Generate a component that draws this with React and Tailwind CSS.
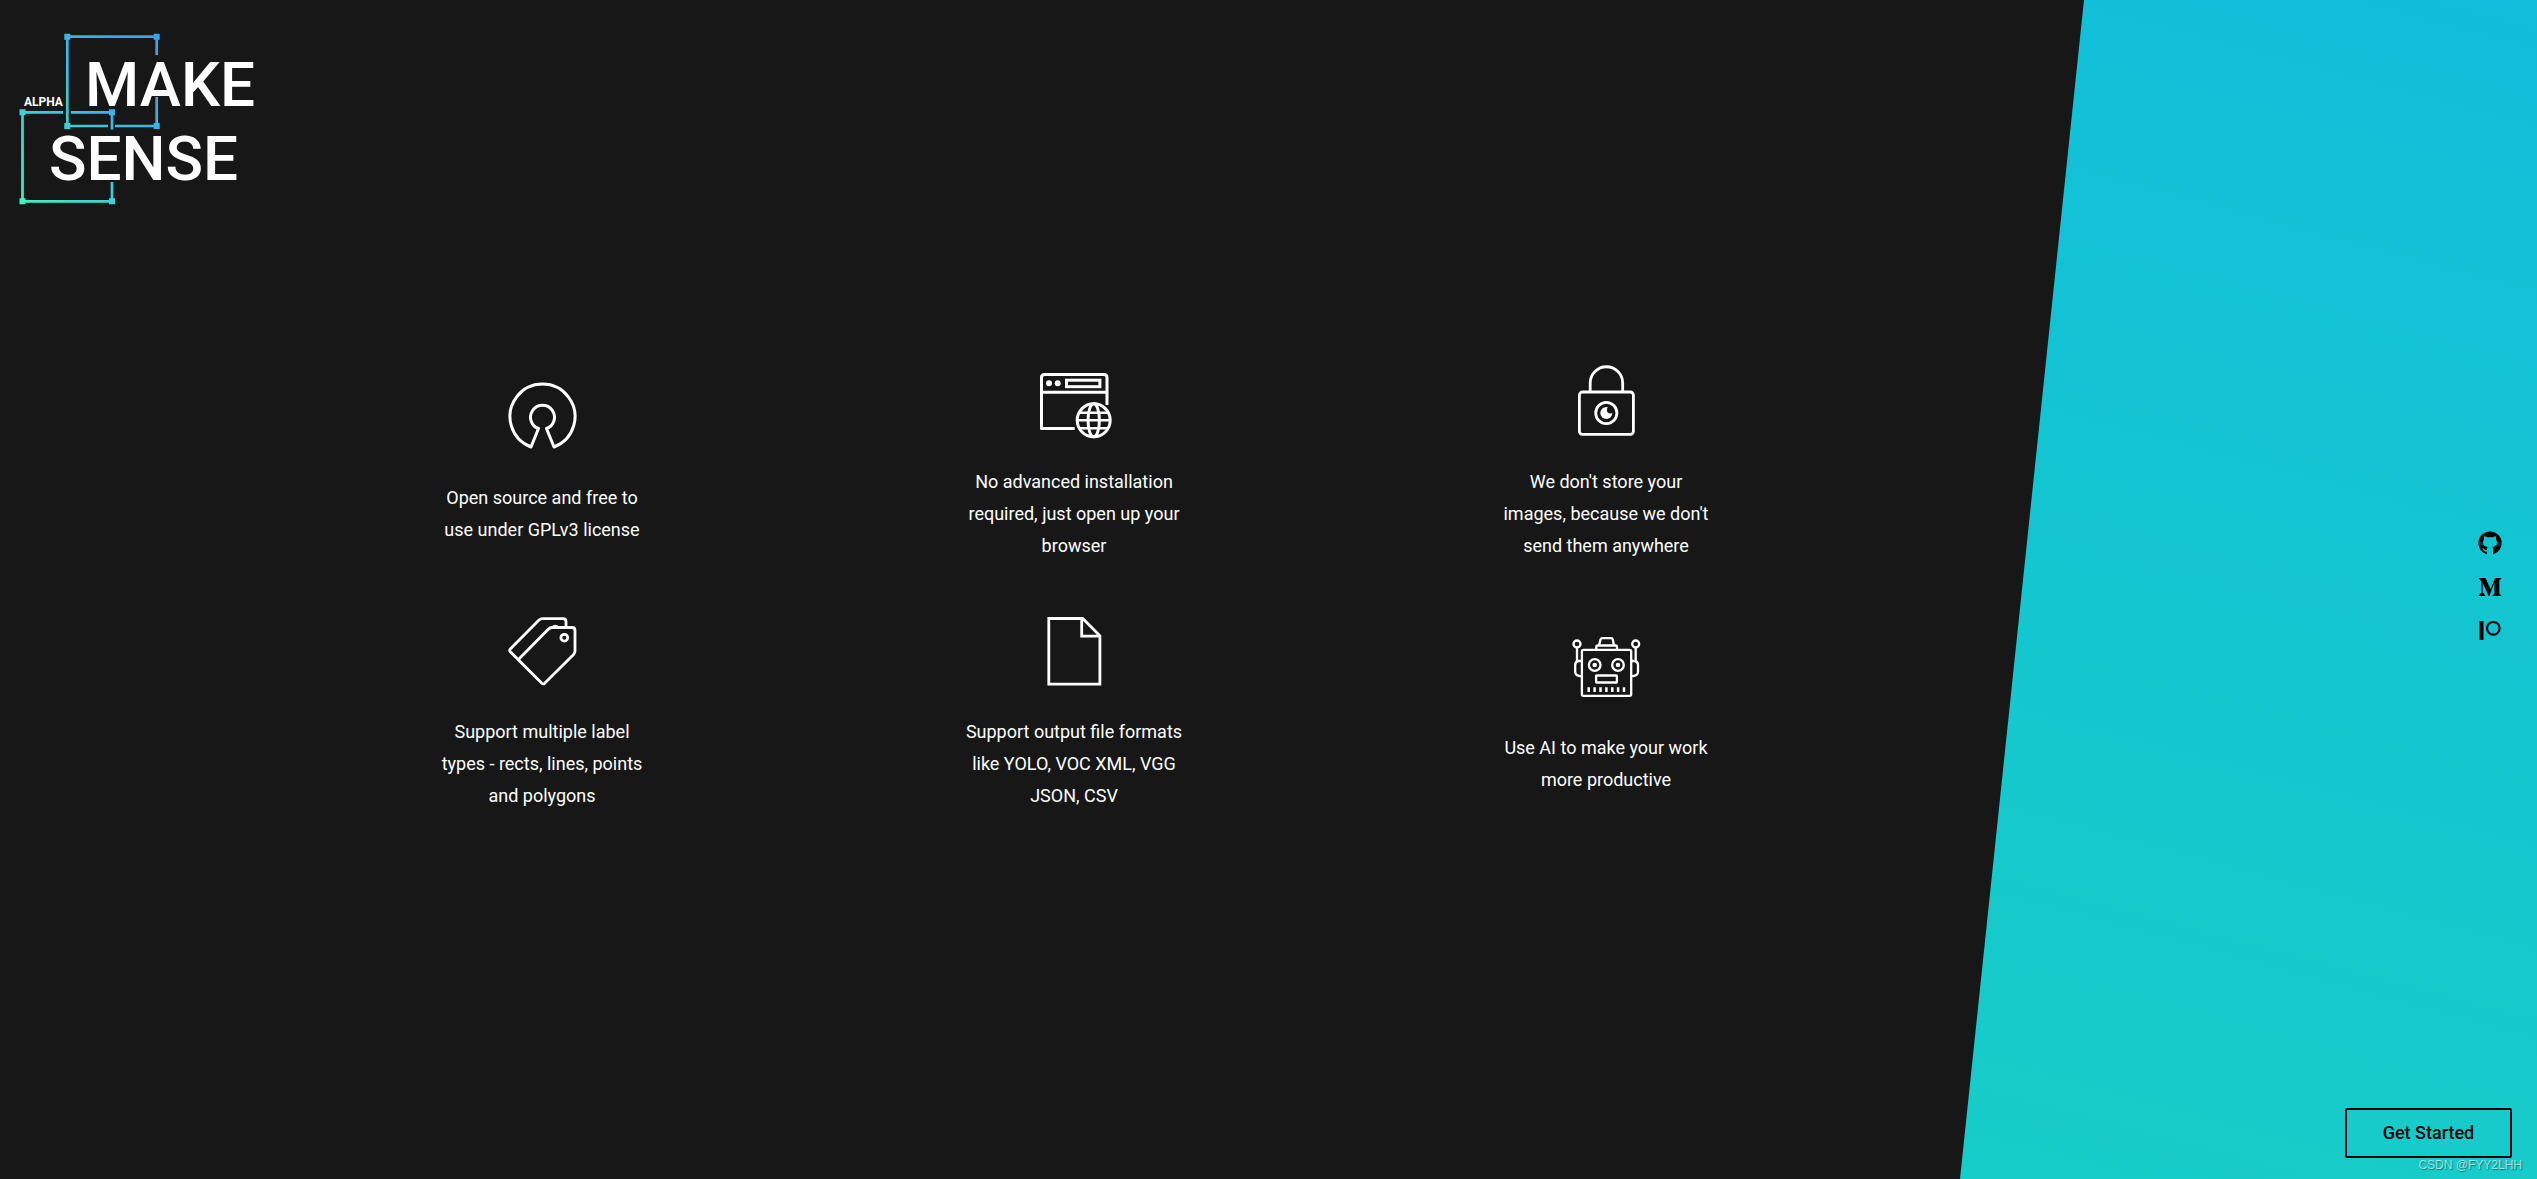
import React from "react";
import { FaMediumM } from "react-icons/fa";

function Logo() {
  return (
    <svg
      role="img"
      aria-label="Make Sense alpha"
      viewBox="16 30 244 176"
      className="h-44 w-[244px]"
      fill="none"
    >
      <defs>
        <linearGradient id="upper" gradientUnits="userSpaceOnUse" x1="67" y1="126" x2="140" y2="60">
          <stop offset="0" stopColor="#3cd0d4" />
          <stop offset="1" stopColor="#38a4f0" />
        </linearGradient>
        <linearGradient id="lower" gradientUnits="userSpaceOnUse" x1="22" y1="201" x2="112" y2="112">
          <stop offset="0" stopColor="#3cf4bc" />
          <stop offset="1" stopColor="#38b4ec" />
        </linearGradient>
      </defs>
      <path d="M156.700 55V36.700H67.300V126H108M115 126H156.700V97" stroke="url(#upper)" strokeWidth="2.700" />
      <path
        d="M64.300 33.700h6v6h-6zM153.700 33.700h6v6h-6zM64.300 123h6v6h-6zM153.700 123h6v6h-6z"
        fill="url(#upper)"
      />
      <path d="M63 112.300H22.500V201.300H112V182M71 112.300H112V129.500" stroke="url(#lower)" strokeWidth="2.700" />
      <path
        d="M19.500 109.300h6v6h-6zM109 109.300h6v6h-6zM19.500 198.300h6v6h-6zM109 198.300h6v6h-6z"
        fill="url(#lower)"
      />
      <g fill="#ffffff" className="font-medium">
        <text x="85" y="106" fontSize="62">MAKE</text>
        <text x="49" y="180" fontSize="62">SENSE</text>
        <text x="24" y="106" fontSize="12" className="font-bold">ALPHA</text>
      </g>
    </svg>
  );
}

function Icon({ width = 2.8, children }) {
  return (
    <svg
      aria-hidden="true"
      viewBox="0 0 72 72"
      className="size-[72px] overflow-visible"
      fill="none"
      stroke="#ffffff"
      strokeWidth={width}
    >
      {children}
    </svg>
  );
}

const OpenSourceIcon = () => (
  <Icon width={3}>
    <path d="M32.500 48.500L25 67A32.500 32.500 0 1 1 48 67L40.500 48.500A12 12 0 1 0 32.500 48.500Z" strokeLinejoin="round" />
  </Icon>
);

const BrowserIcon = () => (
  <Icon width={3}>
    <path d="M69 41V13.500Q69 10.500 66 10.500H6.500Q3.500 10.500 3.500 13.500V64.500H36.700M3.500 28.300H69" strokeLinejoin="round" />
    <g fill="#ffffff" stroke="none">
      <circle cx="11" cy="19.300" r="3" />
      <circle cx="19.700" cy="19.300" r="3" />
    </g>
    <rect x="28.500" y="16.200" width="33.400" height="6.500" />
    <circle cx="55.700" cy="56.300" r="16.500" />
    <ellipse cx="55.700" cy="56.300" rx="5.700" ry="16.500" />
    <path d="M41 48.700H70.500M39.500 56.300H72M41 64.200H70.500" strokeWidth="2.600" />
  </Icon>
);

const LockIcon = () => (
  <Icon>
    <rect x="9.400" y="28" width="54" height="42.300" rx="3" />
    <path d="M20.200 28V19A16.250 16.250 0 0 1 52.700 19V28" />
    <circle cx="36.300" cy="49" r="10.600" />
    <circle cx="36.300" cy="49" r="6" fill="#ffffff" stroke="none" />
    <circle cx="40.300" cy="46" r="3.400" fill="#171717" stroke="none" />
  </Icon>
);

const TagsIcon = () => (
  <Icon>
    <path d="M12.700 45.300L42 15.500Q44 13.500 46 13.500H66Q69 13.500 69 16.500V37Q69 39 67.600 40.400L38.700 69.300Q37.200 70.500 35.800 69.300L4.300 37.800Q3 36.300 4.300 35L33 6Q34.500 4.600 36.500 4.600H57Q60 4.600 60 7.600V13" />
    <circle cx="58.300" cy="23.700" r="3.400" />
    <path d="M45.500 13.500Q49.500 9.500 53 13.500" strokeWidth="1.500" />
  </Icon>
);

const FileIcon = () => (
  <Icon>
    <path d="M44.700 4.500H10.800V70.200H61.900V21.800ZM43.700 4.500V22.200H61.900" />
  </Icon>
);

const RobotIcon = () => (
  <Icon width={2.3}>
    <rect x="11.900" y="19.900" width="49.300" height="45.900" rx="1.500" />
    <path d="M26.300 19V17Q26.300 15.500 27.800 15.500H45.500Q47 15.500 47 17V19M29 15.500L30.500 9.500Q31 8.200 32.400 8.200H41Q42.400 8.200 42.800 9.500L44 15.500" />
    <circle cx="7" cy="14" r="3.500" />
    <circle cx="65.700" cy="14" r="3.500" />
    <path d="M7 17.500V31M65.700 17.500V31M12 31H8.500Q5.200 31.500 5.200 35V42Q5.200 46 12 46.300M61 31H64.500Q68 31.500 68 35V42Q68 46 61 46.300" />
    <circle cx="24.700" cy="35" r="5.800" />
    <circle cx="48" cy="35" r="5.800" />
    <circle cx="24.700" cy="35" r="2.300" fill="#ffffff" stroke="none" />
    <circle cx="48" cy="35" r="2.300" fill="#ffffff" stroke="none" />
    <rect x="26.100" y="45.500" width="20.800" height="7" rx="0.500" />
    <path
      d="M18.700 57.300V62M24.600 57.300V62M30.500 57.300V62M36.400 57.300V62M42.300 57.300V62M48.100 57.300V62M54 57.300V62"
      strokeWidth="2.500"
    />
  </Icon>
);

const features = [
  { icon: OpenSourceIcon, lines: ["Open source and free to", "use under GPLv3 license"] },
  { icon: BrowserIcon, lines: ["No advanced installation", "required, just open up your", "browser"] },
  { icon: LockIcon, lines: ["We don't store your", "images, because we don't", "send them anywhere"] },
  { icon: TagsIcon, lines: ["Support multiple label", "types - rects, lines, points", "and polygons"] },
  { icon: FileIcon, lines: ["Support output file formats", "like YOLO, VOC XML, VGG", "JSON, CSV"] },
  { icon: RobotIcon, lines: ["Use AI to make your work", "more productive"] },
];

function Feature({ icon: FeatureIcon, lines }) {
  return (
    <li className="flex h-[250px] flex-col items-center justify-center gap-[30px]">
      <FeatureIcon />
      <p className="text-center text-lg leading-8 whitespace-nowrap">
        {lines.map((line) => (
          <span key={line} className="block">
            {line}
          </span>
        ))}
      </p>
    </li>
  );
}

function GitHubIcon() {
  return (
    <svg aria-hidden="true" viewBox="0 0 24 24" className="size-6">
      <mask id="cat">
        <rect width="24" height="24" fill="#ffffff" />
        <path
          d="M6.300 5.200Q8 5.200 9.600 6.400Q12 5.800 14.400 6.400Q16 5.200 17.700 5.200Q18.300 6.800 17.900 8.200Q19 9.500 19 11.200Q19 15.400 14.300 15.900Q15.200 16.700 15.200 18.200V24H8.800V20.600Q6.400 21 5.500 19.200Q5 18 3.900 17.300Q5.400 16.700 6.600 18.400Q7.500 19.500 8.900 19Q9 16.700 9.700 15.900Q5 15.400 5 11.200Q5 9.500 6.100 8.200Q5.700 6.800 6.300 5.200Z"
          fill="#000000"
        />
        <path d="M0.500 12L5.500 12M0.800 14L6 13.400M23.500 12L18.500 12M23.200 14L18 13.400" stroke="#000000" strokeWidth="0.400" />
      </mask>
      <circle cx="12" cy="12" r="11.600" mask="url(#cat)" />
    </svg>
  );
}

function PatreonIcon() {
  return (
    <svg aria-hidden="true" viewBox="0 0 24 24" className="size-6">
      <rect x="1.500" y="2" width="4" height="19" />
      <circle cx="15.300" cy="9.300" r="6.300" fill="none" stroke="currentColor" strokeWidth="2.200" />
    </svg>
  );
}

export default function App() {
  return (
    <div className="flex min-h-screen bg-[#171717] font-['Roboto',sans-serif]">
      <main className="grid flex-1 grid-rows-[1fr_auto_1fr] pb-1 text-white">
        <header className="pt-[30px] pl-4">
          <Logo />
        </header>
        <ul className="grid grid-cols-3 pr-[88px] pl-[276px]">
          {features.map((feature) => (
            <Feature key={feature.lines[0]} {...feature} />
          ))}
        </ul>
      </main>

      <aside className="relative grid w-[577px] grid-rows-[1fr_auto_1fr] justify-items-end bg-linear-[15deg,#17cdc7,#11bedb] text-black [clip-path:polygon(124px_0,100%_0,100%_100%,0_100%)]">
        <nav aria-label="Social links" className="row-start-2 flex flex-col gap-5 pr-[35px] pb-1.5">
          <a href="#github" aria-label="GitHub">
            <GitHubIcon />
          </a>
          <a href="#medium" aria-label="Medium">
            <FaMediumM className="size-6" />
          </a>
          <a href="#patreon" aria-label="Patreon">
            <PatreonIcon />
          </a>
        </nav>
        <button
          type="button"
          className="row-start-3 mr-[25px] mb-[21px] h-[50px] w-[167px] self-end rounded-xs border-2 border-black text-lg font-medium"
        >
          Get Started
        </button>
        <span className="absolute right-[15px] bottom-1 font-['Liberation_Sans',sans-serif] text-xs leading-5 text-white/60 [text-shadow:1px_1px_1px_rgba(0,0,0,0.4)]">
          CSDN @FYY2LHH
        </span>
      </aside>
    </div>
  );
}
